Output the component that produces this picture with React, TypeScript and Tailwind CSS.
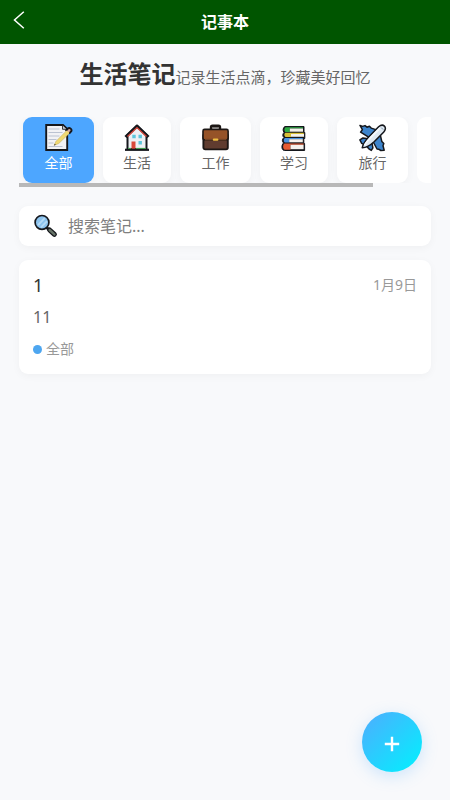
import React, { useState } from 'react';

function MemoIcon() {
  return (
    <svg viewBox="0 0 28 28" className="h-7 w-7" aria-hidden="true">
      <path d="M1.2 1h16.8l4.2 4V26h-21z" fill="#f2f2f5" stroke="#15171c" strokeWidth="1.9" />
      <path d="M17.5 1.5v3.8h4" fill="#c8ccd4" stroke="#15171c" strokeWidth=".8" />
      <path d="M3.5 5h11M3.5 8.5h14M3.5 12h11M3.5 15.5h8M3.5 19h5M3.5 22.5h14" stroke="#bcc3d2" strokeWidth="1" />
      <path d="M9 21.5l2-4.2L22.8 5.4l3 2.6L13.8 19.5z" fill="#efd873" stroke="#b39b4d" strokeWidth=".4" />
      <path d="M20.6 7l2.3-2.5c1.7-1.4 4.6.8 3.2 3l-2 2.1" fill="#d9a8a0" stroke="#15171c" strokeWidth="1.9" />
      <path d="M21.2 7l2.6 2.4" stroke="#efd873" strokeWidth="1.6" />
      <path d="M9 21.5l.8-1.8 1 1z" fill="#333" />
    </svg>
  );
}

function HouseIcon() {
  return (
    <svg viewBox="0 0 28 28" className="h-7 w-7" aria-hidden="true">
      <path d="M4.5 11L14 2l9.5 9v14h-19z" fill="#eef0f4" stroke="#15171c" strokeWidth="2" />
      <path d="M2.5 13L14 2l11.5 11" fill="none" stroke="#15171c" strokeWidth="3" strokeLinejoin="round" />
      <path d="M4.5 12.6L14 3.6l9.5 9" fill="none" stroke="#d6473b" strokeWidth="1.4" />
      <path d="M9.3 10.8h3.4v3.4H9.3zM15.5 10.8h3.4v3.4h-3.4zM15.5 17h3.4v3.4h-3.4z" fill="#5cc6dc" />
      <path d="M8.5 17.5h4V25h-4z" fill="#d9483b" />
      <path d="M2 25.8h24" stroke="#15171c" strokeWidth="2.2" />
      <path d="M5 24.4h3M13 24.4h10" stroke="#48a956" strokeWidth="1" />
    </svg>
  );
}

function BriefcaseIcon() {
  return (
    <svg viewBox="0 0 28 28" className="h-7 w-7" aria-hidden="true">
      <path d="M9 6V3.2c0-.9.6-1.5 1.5-1.5h6c.9 0 1.5.6 1.5 1.5V6" fill="none" stroke="#1c1715" strokeWidth="2.4" />
      <path d="M10 3.6h7" stroke="#6b6764" strokeWidth="1" />
      <rect x="1.4" y="10" width="24.4" height="15.4" rx="1.8" fill="#603c2f" stroke="#1c1715" strokeWidth="1.9" />
      <path d="M2.6 5.4h22c.9 0 1.5.6 1.5 1.5V14c0 1.2-1 2-2.4 2H3.4C2 16 1 15.2 1 14V6.9c0-.9.7-1.5 1.6-1.5z" fill="#965328" stroke="#1c1715" strokeWidth="1.6" />
      <path d="M3 15.6h21.4" stroke="#744527" strokeWidth="1.6" />
      <rect x="10.8" y="14.4" width="5.6" height="2.4" rx="1" fill="#f0bd42" />
    </svg>
  );
}

function BooksIcon() {
  return (
    <svg viewBox="0 0 28 28" className="h-7 w-7" aria-hidden="true">
      <path d="M5 2.5h19v6h.8v6h-1v5h.8v7H4.5C1.5 26.5 1 21 3.6 19 1.8 17.5 2 15 4 13.5 2.4 12.5 2.4 10 4 8.5 2.5 6.8 3 3.2 5 2.5z" fill="#15171c" stroke="#15171c" strokeLinejoin="round" />
      <path d="M5.5 3.3H23v1.2H9.8v3.4H5.3c-1.3-1-1.2-3.6.2-4.6z" fill="#2eac43" />
      <path d="M9.8 4.5H23v3.2H9.8z" fill="#f4f1ec" />
      <path d="M5.3 8.8h18.5v1.2H11v3H5.5C4 12.2 4 9.6 5.3 8.8z" fill="#d8bf36" />
      <path d="M11 10h13v2.8H11z" fill="#f4f1ec" />
      <path d="M4.8 14h18v1.2H9.2v3.4H4.8c-1.4-1-1.3-3.6 0-4.6z" fill="#4a93e0" />
      <path d="M9.2 15.2h13.6v3.1H9.2z" fill="#f4f1ec" />
      <path d="M4.6 19.6h19v1.2H10.5v4.9H4.6c-2-1-2-4.9 0-6.1z" fill="#e65b32" />
      <path d="M10.5 20.8h13.1v4.4H10.5z" fill="#f4f1ec" />
    </svg>
  );
}

function PlaneIcon() {
  return (
    <svg viewBox="0 0 28 28" className="h-7 w-7" aria-hidden="true">
      <g stroke="#15171c" strokeWidth="1.5" strokeLinejoin="round">
        <path d="M1 1.4l2.6 1L6 1.6l2 1.6 2.4-1 1.8 1.9 4.6 1.5 2.5 1.6L11.5 15 8 12.2 1.6 8.2 3.4 5.6z" fill="#3d84cc" />
        <path d="M25.2 26.3l-3.4.2-2.2-1.3-1.6-.2-4-7.5L13 14.5 20.6 8l2.2 9.4 2 2.2-.8 2.2z" fill="#3d84cc" />
        <path d="M.9 15.8l3-1.8 5 .8 4 4 1 5-1.6 2.6-2-1.2-3.6-4-4-1.8z" fill="#3d84cc" />
        <path d="M3.2 23.8c.8-4.6 3.8-8 7-11.4L19.6 2.8c2-1.7 4.4-2 5.8-.7 1.5 1.4 1.2 3.9-.6 5.8l-9.4 9.6c-3.4 3.2-7.2 6.2-12.2 6.3z" fill="#dfe9f2" />
      </g>
      <path d="M5.6 21.2c1.4-2.8 3.4-5 6-7.6L21 4.2" fill="none" stroke="#f6fafd" strokeWidth="1.8" />
      <path d="M22.2 3.6l2 2" stroke="#7d94a8" strokeWidth="1" />
    </svg>
  );
}

function SearchIcon() {
  return (
    <svg viewBox="0 0 24 24" className="h-6 w-6 shrink-0" aria-hidden="true">
      <path d="M12 13l4 3.6" stroke="#15171c" strokeWidth="3" />
      <path d="M15.6 16l4.8 4.4" stroke="#15171c" strokeWidth="5" strokeLinecap="round" />
      <path d="M15.6 16l4.8 4.4" stroke="#667367" strokeWidth="2.4" strokeLinecap="round" />
      <circle cx="8" cy="8.4" r="6.9" fill="#8cc3ee" stroke="#15171c" strokeWidth="1.7" />
      <path d="M4 11.1l6.7-7M7 13.4l6-6.2" stroke="#b6dbf6" strokeWidth="1.8" />
    </svg>
  );
}

const categories = [
  { id: 'all', name: '全部', width: 'w-[71px]', icon: <MemoIcon /> },
  { id: 'life', name: '生活', width: 'w-[68px]', icon: <HouseIcon /> },
  { id: 'work', name: '工作', width: 'w-[71px]', icon: <BriefcaseIcon /> },
  { id: 'study', name: '学习', width: 'w-[68px]', icon: <BooksIcon /> },
  { id: 'travel', name: '旅行', width: 'w-[71px]', icon: <PlaneIcon /> },
];

const notes = [{ id: 1, title: '1', content: '11', date: '1月9日', category: '全部' }];

export default function App() {
  const [active, setActive] = useState('all');
  const [query, setQuery] = useState('');

  const visibleNotes = notes.filter((note) => note.title.includes(query) || note.content.includes(query));

  return (
    <div className="min-h-screen bg-[#f8f9fb] font-['Noto_Sans','Noto_Sans_CJK_SC',sans-serif] text-[#333]">
      {/* Navigation bar */}
      <header className="grid h-11 grid-cols-[44px_1fr_44px] items-center bg-[#005500] text-white">
        <button type="button" aria-label="返回" className="flex h-11 items-center pb-1 pl-3">
          <svg viewBox="0 0 14 20" className="h-5 w-3.5" fill="none" stroke="currentColor" strokeWidth="1.5" aria-hidden="true">
            <path d="M11.8 1.8L2.5 10l9.3 8.2" />
          </svg>
        </button>
        <h1 className="text-center text-base font-bold">记事本</h1>
      </header>

      <main className="px-[19px] pt-3">
        <div className="flex items-baseline justify-center whitespace-nowrap">
          <h2 className="text-2xl leading-9 font-bold">生活笔记</h2>
          <p className="text-[15px] text-[#666]">记录生活点滴，珍藏美好回忆</p>
        </div>

        {/* Categories */}
        <nav className="mt-[25px] flex gap-[9px] overflow-hidden pl-1">
          {categories.map((category) => (
            <button
              key={category.id}
              type="button"
              onClick={() => setActive(category.id)}
              className={`flex h-[66px] shrink-0 flex-col items-center rounded-[9px] pt-[7px] text-sm leading-[22px] shadow-[0_2px_8px_rgba(0,0,0,0.04)] ${category.width} ${
                active === category.id ? 'bg-[#4da6ff] text-white' : 'bg-white text-[#666]'
              }`}
            >
              {category.icon}
              {category.name}
            </button>
          ))}
          <button type="button" aria-label="更多" className="h-[66px] w-[68px] shrink-0 rounded-[9px] bg-white" />
        </nav>
        <div className="h-1">
          <div className="h-1 w-[86%] bg-[#b8b8b8]" />
        </div>

        {/* Search */}
        <label className="mt-[19px] flex h-10 items-center gap-[10px] rounded-[9px] bg-white px-[15px] shadow-[0_2px_8px_rgba(0,0,0,0.04)]">
          <SearchIcon />
          <input
            type="text"
            aria-label="搜索笔记"
            placeholder="搜索笔记..."
            value={query}
            onChange={(e) => setQuery(e.target.value)}
            className="min-w-0 flex-1 bg-transparent text-base outline-none placeholder:text-[#808080]"
          />
        </label>

        {/* Notes */}
        <div className="mt-[14px] space-y-3">
          {visibleNotes.map((note) => (
            <article key={note.id} className="rounded-[9px] bg-white px-[14px] pt-3 pb-[14px] shadow-[0_2px_8px_rgba(0,0,0,0.04)]">
              <div className="flex items-center justify-between">
                <h3 className="text-lg leading-[26px]">{note.title}</h3>
                <time className="text-sm text-[#999]">{note.date}</time>
              </div>
              <p className="mt-[7px] text-base leading-6 text-[#666]">{note.content}</p>
              <div className="mt-[9px] flex items-center gap-1 text-sm leading-[22px] text-[#999]">
                <span className="h-[9px] w-[9px] rounded-full bg-[#4da6f0]" />
                {note.category}
              </div>
            </article>
          ))}
        </div>
      </main>

      <button
        type="button"
        aria-label="新建笔记"
        className="fixed right-7 bottom-7 flex h-[60px] w-[60px] items-center justify-center rounded-full bg-[linear-gradient(135deg,#4facfe,#00f2fe)] text-white shadow-[0_4px_16px_rgba(79,172,254,0.25)]"
      >
        <svg viewBox="0 0 16 16" className="mt-1 h-4 w-4" stroke="currentColor" strokeWidth="2.4" aria-hidden="true">
          <path d="M8 .8v14.4M.8 8h14.4" />
        </svg>
      </button>
    </div>
  );
}
